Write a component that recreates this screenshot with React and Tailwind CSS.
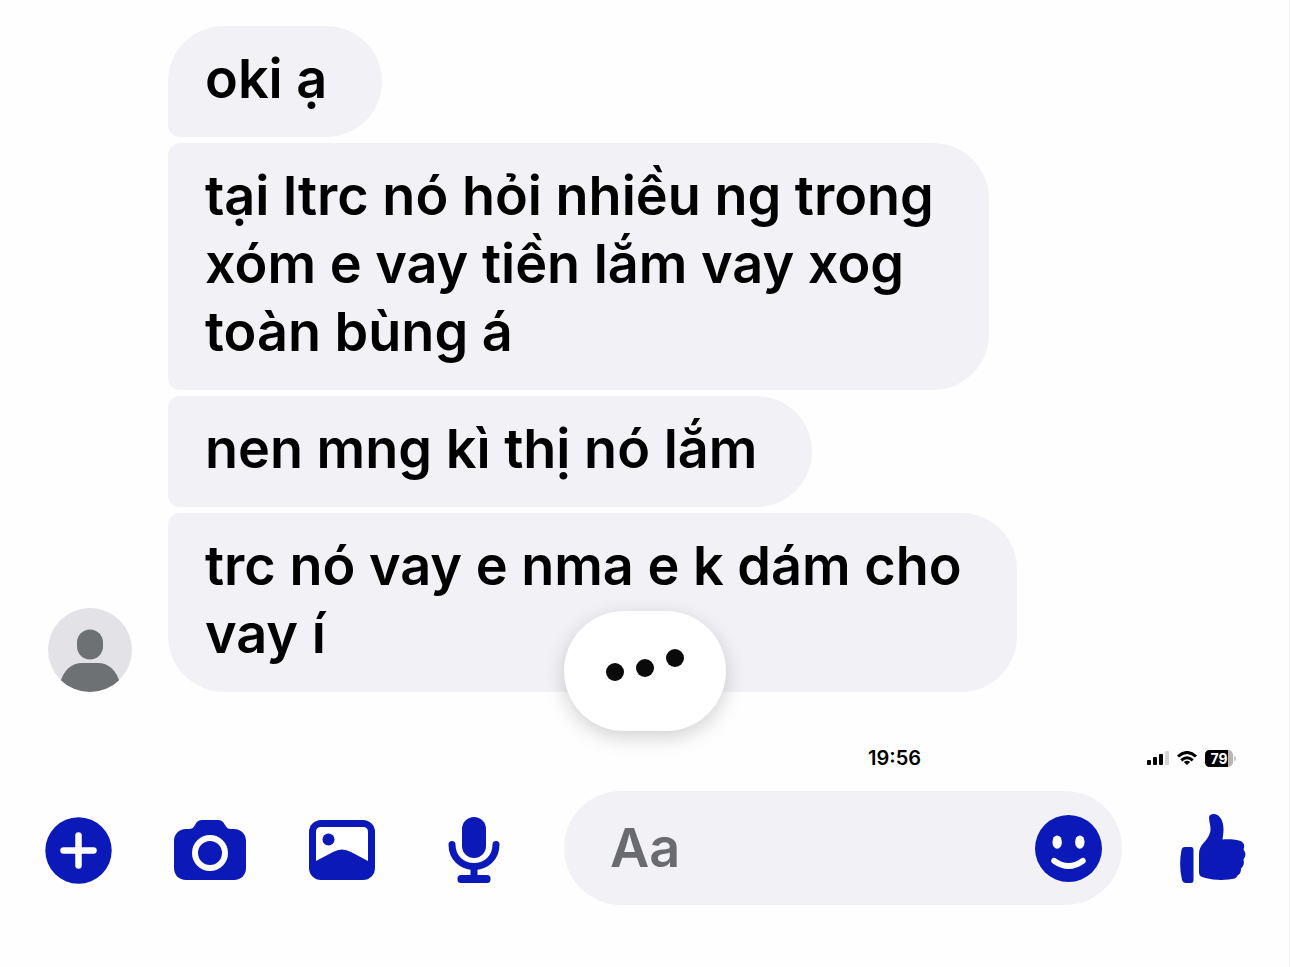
const messages = [
  { text: "oki ạ", shape: "rounded-tl-[56px] rounded-bl-[12px]" },
  {
    text: "tại ltrc nó hỏi nhiều ng trong\nxóm e vay tiền lắm vay xog\ntoàn bùng á",
    shape: "rounded-l-[12px]",
  },
  { text: "nen mng kì thị nó lắm", shape: "rounded-l-[12px]" },
  {
    text: "trc nó vay e nma e k dám cho\nvay í",
    shape: "rounded-tl-[12px] rounded-bl-[56px]",
  },
];

const PlusIcon = () => (
  <svg width="67" height="67" viewBox="0 0 67 67" fill="none" aria-hidden="true">
    <circle cx="33.5" cy="33.5" r="33.2" fill="#0a19b8" />
    <path d="M33.5 18.5v30M18.5 33.5h30" stroke="#fff" strokeWidth="6.5" strokeLinecap="round" />
  </svg>
);

const CameraIcon = () => (
  <svg width="72" height="60" viewBox="0 0 72 60" fill="none" aria-hidden="true">
    <path
      d="M12 9h3c3 0 4-1 6-4 2-4 4-5 8-5h14c4 0 6 1 8 5 2 3 3 4 6 4h3c7 0 12 5 12 12v27c0 7-5 12-12 12H12C5 60 0 55 0 48V21C0 14 5 9 12 9Z"
      fill="#0a19b8"
    />
    <circle cx="36" cy="33" r="15" stroke="#fff" strokeWidth="6" />
  </svg>
);

const PhotoIcon = () => (
  <svg width="66" height="60" viewBox="0 0 66 60" aria-hidden="true">
    <rect width="66" height="60" rx="12" fill="#0a19b8" />
    <path d="M7 41V12q0-5 5-5h42q5 0 5 5v29L42 32Q33 27 24 32Z" fill="#fff" />
    <circle cx="19.5" cy="19.5" r="6" fill="#0a19b8" />
  </svg>
);

const MicIcon = () => (
  <svg width="52" height="66" viewBox="0 0 52 66" fill="none" aria-hidden="true">
    <rect x="14" y="0" width="24" height="41" rx="12" fill="#0a19b8" />
    <path d="M4 27.5C4 41 14 49.5 26 49.5S48 41 48 27.5" stroke="#0a19b8" strokeWidth="7" strokeLinecap="round" />
    <path d="M26 49v12" stroke="#0a19b8" strokeWidth="7" />
    <rect x="9.5" y="58" width="33" height="8" rx="3.5" fill="#0a19b8" />
  </svg>
);

const SmileIcon = () => (
  <svg width="67" height="67" viewBox="0 0 68 68" fill="none" aria-hidden="true">
    <circle cx="34" cy="34" r="34" fill="#0a19b8" />
    <ellipse cx="22.5" cy="27.5" rx="4.8" ry="6.8" fill="#fff" />
    <ellipse cx="45.5" cy="27.5" rx="4.8" ry="6.8" fill="#fff" />
    <path d="M19.5 46.5Q34 57 48.5 46.5" stroke="#fff" strokeWidth="6" strokeLinecap="round" />
  </svg>
);

const LikeIcon = () => (
  <svg width="66" height="70" viewBox="0 0 66 70" fill="#0a19b8" aria-hidden="true">
    <path d="M5 33h6q2.500 0 2.500 3v30q0 3-2.500 3H6q-3 0-4-3Q-1.500 51 1.500 36q.5-3 3.500-3Z" />
    <path d="M19 40c0-5 2-8 4.500-11 4.500-5 7-9 7-14 0-4-1.500-8-1.500-11C29 1 31 0 33.500 0 40 0 43.500 7 43.500 15c0 4-.5 7-1 10.500 7-.5 14 0 18 1.500 4 2 4.500 5 3 8.500 2.500 3 2.500 7 0 10 1 4 0 7-2.500 9 0 4-1.500 6-3.500 7-1 3-4 3.500-9 4-7 .8-16 .5-23-1.500-4-1-6.500-2-6.500-6Z" />
  </svg>
);

const SignalIcon = () => (
  <svg width="22" height="14" viewBox="0 0 22 14" aria-hidden="true">
    <rect x="0" y="9" width="4" height="5" rx="1" />
    <rect x="6" y="6" width="4" height="8" rx="1" />
    <rect x="12" y="3" width="4" height="11" rx="1" />
    <rect x="18" y="0" width="4" height="14" rx="1" fill="#d4d4d4" />
  </svg>
);

const WifiIcon = () => (
  <svg width="20" height="14" viewBox="0 0 20 14" fill="none" stroke="#000" strokeWidth="3" aria-hidden="true">
    <path d="M1 5.5Q10-2.5 19 5.5" />
    <path d="M4.3 9.3Q10 4.3 15.7 9.3" />
    <path d="M10 14 6.8 11Q10 8.5 13.2 11Z" fill="#000" stroke="none" />
  </svg>
);

const BatteryIcon = () => (
  <svg width="31" height="17" viewBox="0 0 31 17" aria-hidden="true">
    <rect x="0" y="0" width="28" height="17" rx="5" fill="#b5b5b5" />
    <path d="M5 0h18v17H5q-5 0-5-5V5q0-5 5-5Z" fill="#000" />
    <path d="M29 5.5q2 1 2 3t-2 3Z" fill="#c4c4c4" />
    <text x="14" y="13.5" textAnchor="middle" fill="#fff" fontSize="14" fontWeight="700">
      79
    </text>
  </svg>
);

const Avatar = () => (
  <svg className="shrink-0" width="84" height="84" viewBox="0 0 84 84" role="img" aria-label="Profile">
    <defs>
      <clipPath id="avatar">
        <circle cx="42" cy="42" r="42" />
      </clipPath>
    </defs>
    <g clipPath="url(#avatar)">
      <rect width="84" height="84" fill="#e2e2e7" />
      <rect x="29" y="21.5" width="26" height="30" rx="13" fill="#6d7174" />
      <path d="M12 76C15 62 24 55 34 55h16c10 0 19 7 22 21v10H12Z" fill="#6d7174" />
    </g>
  </svg>
);

const TypingBubble = () => (
  <div
    role="status"
    aria-label="Typing"
    className="absolute left-1/2 top-[611px] flex h-[120px] w-[162px] -translate-x-1/2 items-center justify-center gap-3 rounded-[60px] bg-white shadow-[0_6px_20px_rgba(0,0,0,0.18)]"
  >
    <span className="mt-0.5 size-[18px] rounded-full bg-[#0a0a0a]" />
    <span className="mb-1.5 size-[18px] rounded-full bg-[#0a0a0a]" />
    <span className="mb-[26px] size-[18px] rounded-full bg-[#0a0a0a]" />
  </div>
);

const StatusBar = () => (
  <div className="mt-[52px] flex h-7 items-center justify-end pr-[53px]">
    <time className="mr-[226px] text-[20px] font-semibold leading-7">19:56</time>
    <div className="flex items-center gap-2">
      <SignalIcon />
      <WifiIcon />
      <BatteryIcon />
    </div>
  </div>
);

const Composer = () => (
  <form className="mt-[19px] flex items-center pl-[45px] pr-[43px]" onSubmit={(e) => e.preventDefault()}>
    <div className="mt-1 flex shrink-0 items-center">
      <button type="button" aria-label="More">
        <PlusIcon />
      </button>
      <button type="button" aria-label="Camera" className="ml-[62px]">
        <CameraIcon />
      </button>
      <button type="button" aria-label="Photos" className="ml-[63px]">
        <PhotoIcon />
      </button>
      <button type="button" aria-label="Voice message" className="ml-[73px]">
        <MicIcon />
      </button>
    </div>
    <div className="ml-16 flex h-[114px] min-w-0 flex-1 items-center rounded-full bg-[#f2f2f6] pl-[46px] pr-5">
      <input
        type="text"
        aria-label="Message"
        placeholder="Aa"
        className="min-w-0 flex-1 bg-transparent text-[54px] font-semibold leading-[68px] outline-none placeholder:text-[#696b70]"
      />
      <button type="button" aria-label="Emoji">
        <SmileIcon />
      </button>
    </div>
    <button type="button" aria-label="Like" className="ml-[58px] mt-0.5 shrink-0">
      <LikeIcon />
    </button>
  </form>
);

const App = () => {
  return (
    <main className="relative min-h-screen border-r border-[#efefef] bg-[#fefefe] pt-[26px] font-['Inter',sans-serif] text-black">
      <section className="flex items-end gap-9 pl-12">
        <Avatar />
        <ul className="flex flex-col items-start gap-[6px]">
          {messages.map((message) => (
            <li
              key={message.text}
              className={`whitespace-pre-line rounded-r-[56px] bg-[#f2f2f6] pb-6 pl-[37px] pr-[55px] pt-[19px] text-[54px] font-semibold leading-[68px] ${message.shape}`}
            >
              {message.text}
            </li>
          ))}
        </ul>
      </section>
      <TypingBubble />
      <StatusBar />
      <Composer />
    </main>
  );
};

export default App;
